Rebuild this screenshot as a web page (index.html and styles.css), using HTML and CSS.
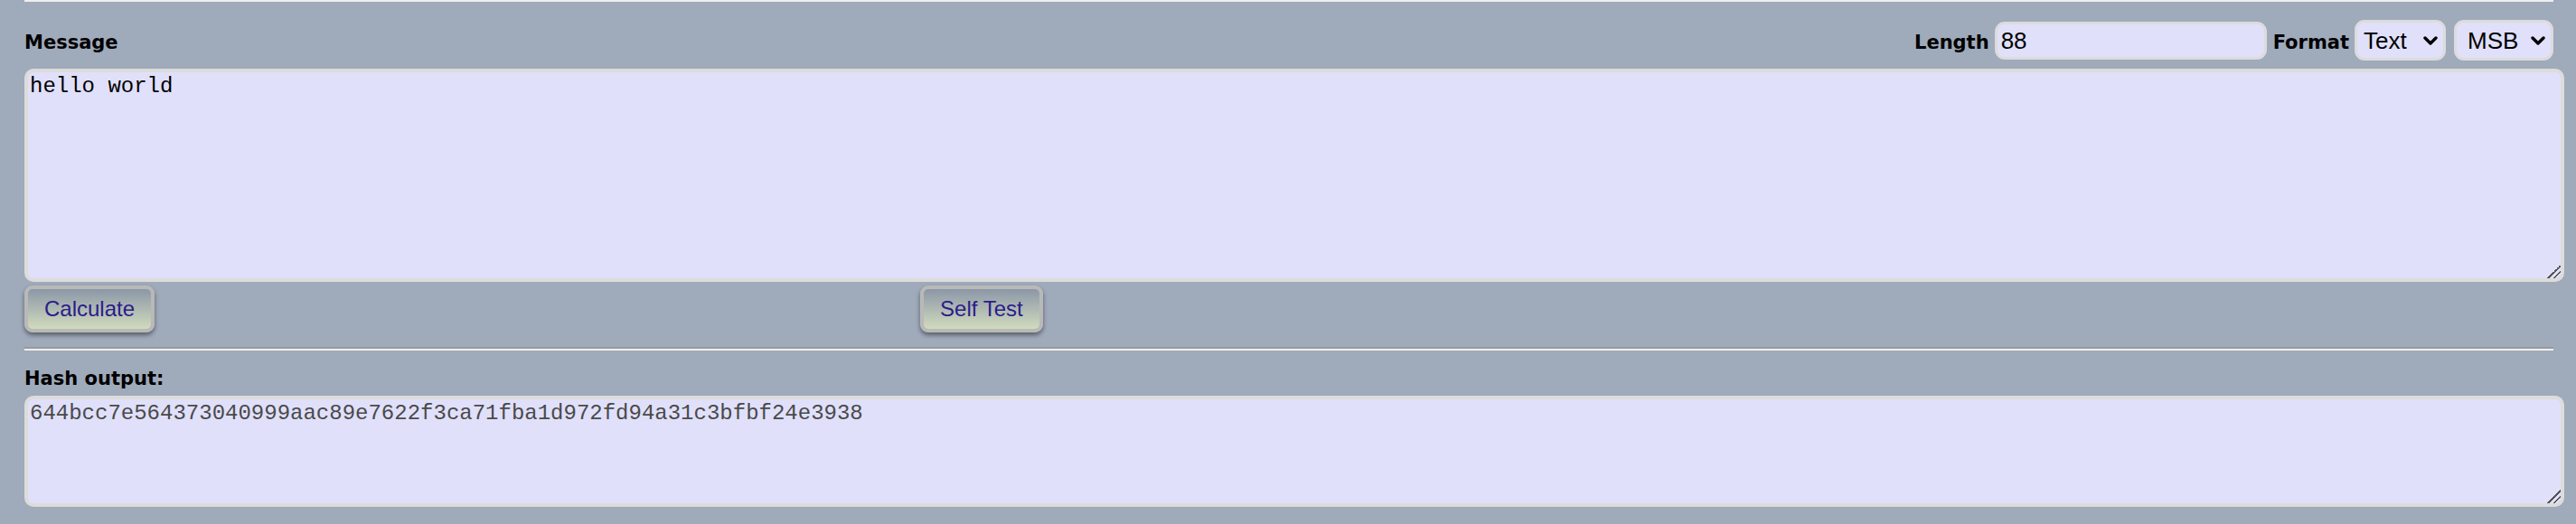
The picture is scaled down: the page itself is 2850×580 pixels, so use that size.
FILE: index.html
```html
<!DOCTYPE html>
<html>
<head>
<meta charset="utf-8">
<title>Hash</title>
<link rel="stylesheet" href="styles.css">
</head>
<body>
<div class="page">
  <div class="top-rule"></div>
  <div class="head-row">
    <label class="label">Message</label>
    <div class="controls">
      <label class="label">Length</label>
      <input class="len-input" type="text" value="88">
      <label class="label">Format</label>
      <span class="sel-wrap">
        <select class="sel sel-format"><option>Text</option><option>Hex</option></select>
        <svg class="chev" width="16" height="11" viewBox="0 0 16 11"><path d="M2 2 L8 8 L14 2" fill="none" stroke="#000" stroke-width="3.4" stroke-linecap="round" stroke-linejoin="round"/></svg>
      </span>
      <span class="sel-wrap">
        <select class="sel sel-order"><option>MSB</option><option>LSB</option></select>
        <svg class="chev" width="16" height="11" viewBox="0 0 16 11"><path d="M2 2 L8 8 L14 2" fill="none" stroke="#000" stroke-width="3.4" stroke-linecap="round" stroke-linejoin="round"/></svg>
      </span>
    </div>
  </div>
  <textarea class="area area-msg">hello world</textarea>
  <div class="btn-row">
    <button class="btn">Calculate</button>
    <button class="btn btn-self">Self Test</button>
  </div>
  <div class="rule"></div>
  <div class="label hash-label">Hash output:</div>
  <textarea class="area area-out" readonly>644bcc7e564373040999aac89e7622f3ca71fba1d972fd94a31c3bfbf24e3938</textarea>
</div>
</body>
</html>
```
FILE: styles.css
```css
html, body {
  margin: 0;
  padding: 0;
  background: #9faabb;
}
.page {
  padding: 0 25px 0 27px;
}
.top-rule {
  height: 2px;
  background: #efefef;
}
.label {
  font-family: "DejaVu Sans", Verdana, sans-serif;
  font-weight: bold;
  font-size: 21px;
  line-height: 25px;
  color: #000;
}
.head-row {
  display: flex;
  justify-content: space-between;
  align-items: baseline;
  padding-top: 20px;
}
.controls {
  display: flex;
  align-items: baseline;
}
.len-input {
  box-sizing: border-box;
  width: 301px;
  height: 42px;
  margin: 0 7px 0 6px;
  padding: 0 4px;
  border: 3px solid #dcdcdc;
  border-radius: 11px;
  background: #e0e0fa;
  font-family: "Liberation Sans", Arial, sans-serif;
  font-size: 26px;
  color: #000;
  outline: none;
}
.sel-wrap {
  position: relative;
  display: inline-block;
  margin-left: 6px;
}
.sel-wrap + .sel-wrap {
  margin-left: 9px;
}
.sel {
  -webkit-appearance: none;
  appearance: none;
  box-sizing: border-box;
  height: 45px;
  border: 3px solid #dcdcdc;
  border-radius: 11px;
  background: #e0e0fa;
  font-family: "Liberation Sans", Arial, sans-serif;
  font-size: 26px;
  color: #000;
  padding: 0 0 0 7px;
  outline: none;
}
.sel-format {
  width: 101px;
}
.sel-order {
  width: 110px;
  padding-left: 12px;
}
.chev {
  position: absolute;
  right: 9px;
  top: 18px;
  pointer-events: none;
}
.area {
  display: block;
  width: 100%;
  border: 4px solid #dcdcdc;
  border-radius: 10px;
  background: #e0e0fa;
  padding: 2px;
  font-family: "Liberation Mono", "Courier New", monospace;
  font-size: 24px;
  outline: none;
  resize: both;
}
.area::-webkit-resizer {
  background: linear-gradient(135deg,
    transparent 0 50%,
    #555 50% 57%,
    transparent 57% 72%,
    #555 72% 79%,
    transparent 79% 100%);
}
.area-msg {
  margin-top: 9px;
  height: 224px;
  color: #000;
}
.area-out {
  margin-top: 6px;
  height: 111px;
  color: #4a4a4a;
}
.btn-row {
  display: flex;
  margin-top: 4px;
}
.btn {
  box-sizing: border-box;
  height: 52px;
  padding: 0 18px;
  border: 4px solid #b9b9b9;
  border-radius: 9px;
  background: linear-gradient(to bottom, #8c97a8, #d1dbbd);
  box-shadow: 0 3px 5px rgba(0, 0, 0, 0.45);
  font-family: "Liberation Sans", Arial, sans-serif;
  font-size: 24px;
  color: #2a1c8c;
}
.btn-self {
  margin-left: 847px;
}
.rule {
  margin-top: 16px;
  height: 2px;
  background: #9a9a9a;
  border-bottom: 2px solid #efefef;
}
.hash-label {
  margin-top: 19px;
}
```
